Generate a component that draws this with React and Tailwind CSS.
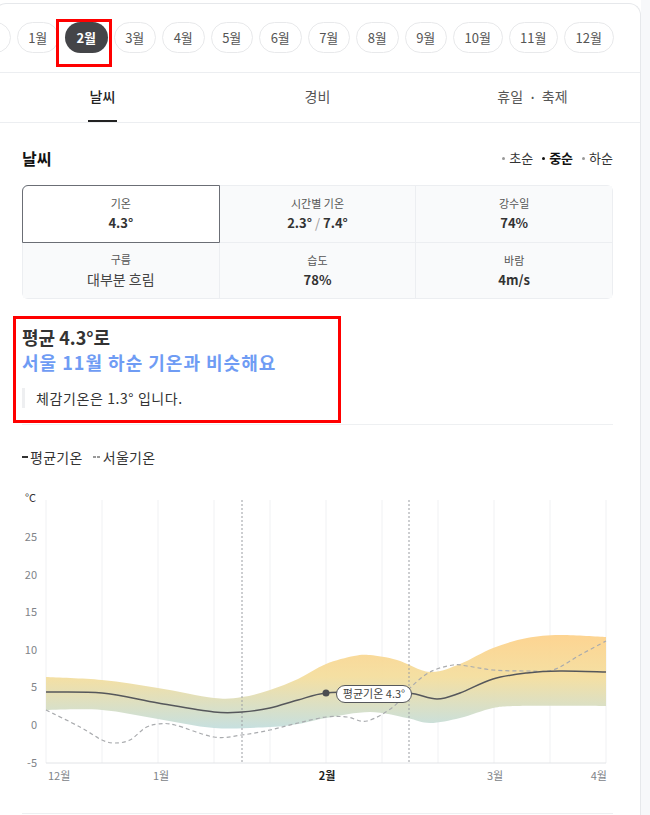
import React from 'react';

const months = ['1월', '2월', '3월', '4월', '5월', '6월', '7월', '8월', '9월', '10월', '11월', '12월'];

// Chart points in local svg coords (page x - 22, page y - 485)
const upper = [[24,192],[80,195],[136,203],[192,213],[220,212],[248,205],[276,194],[304,179],[332,171],[348,170],[375,175],[408,187],[438,179],[471,163],[505,153],[538,150],[584,152]];
const lower = [[24,225],[80,225],[136,234],[192,243],[248,242],[276,239],[304,233],[348,227],[385,233],[408,238],[438,233],[471,223],[498,221],[584,221]];
const avg = [[24,207],[80,208],[136,218],[192,227],[220,227],[248,223],[276,215],[304,208],[348,207],[387,208],[415,214],[438,208],[471,194],[505,188],[538,186],[584,187]];
const seoul = [[24,225],[58,242],[80,255],[93,258],[108,255],[123,243],[136,239],[153,240],[192,252],[220,250],[248,245],[276,238],[304,232],[325,232],[345,236],[371,222],[388,203],[408,187],[431,180],[445,181],[471,185],[505,186],[531,185],[558,170],[584,156]];

// Catmull-Rom to bezier
const smooth = (pts) => {
  let d = `M${pts[0][0]},${pts[0][1]}`;
  for (let i = 0; i < pts.length - 1; i++) {
    const p0 = pts[i - 1] || pts[i];
    const p1 = pts[i];
    const p2 = pts[i + 1];
    const p3 = pts[i + 2] || p2;
    const c1x = p1[0] + (p2[0] - p0[0]) / 6;
    const c1y = p1[1] + (p2[1] - p0[1]) / 6;
    const c2x = p2[0] - (p3[0] - p1[0]) / 6;
    const c2y = p2[1] - (p3[1] - p1[1]) / 6;
    d += ` C${c1x},${c1y} ${c2x},${c2y} ${p2[0]},${p2[1]}`;
  }
  return d;
};

const bandPath = smooth(upper) + ' ' + smooth([...lower].reverse()).replace('M', 'L') + ' Z';

const yTicks = [25, 20, 15, 10, 5, 0, -5];

const Chart = () => (
  <svg width="591" height="328" className="block">
    <defs>
      <linearGradient id="band" x1="0" y1="150" x2="0" y2="243" gradientUnits="userSpaceOnUse">
        <stop offset="0" stopColor="#fdd28c" />
        <stop offset="0.45" stopColor="#f4de9e" />
        <stop offset="1" stopColor="#c4dedd" />
      </linearGradient>
    </defs>
    {/* vertical grid */}
    {Array.from({ length: 11 }).map((_, i) => (
      <line key={i} x1={24 + i * 56} x2={24 + i * 56} y1="15" y2="278" stroke="#f0f1f3" strokeWidth="1" />
    ))}
    <line x1="24" x2="584" y1="278" y2="278" stroke="#e2e4e7" strokeWidth="1" />
    {/* y axis */}
    <text x="14" y="17" textAnchor="end" fontSize="11" fill="#333">°C</text>
    {yTicks.map((v) => (
      <text key={v} x="15" y={240 - v * 7.52 + 4} textAnchor="end" fontSize="11" fill="#808388">{v}</text>
    ))}
    {/* band */}
    <path d={bandPath} fill="url(#band)" opacity="0.95" />
    {/* period markers */}
    <line x1="220" x2="220" y1="15" y2="278" stroke="#9a9da2" strokeWidth="1" strokeDasharray="2 2" />
    <line x1="387" x2="387" y1="15" y2="278" stroke="#9a9da2" strokeWidth="1" strokeDasharray="2 2" />
    {/* seoul line */}
    <path d={smooth(seoul)} fill="none" stroke="#a9abae" strokeWidth="1.2" strokeDasharray="4 3" />
    {/* average line */}
    <path d={smooth(avg)} fill="none" stroke="#55575b" strokeWidth="1.5" />
    <circle cx="304" cy="208" r="3.5" fill="#4a4c50" />
    <rect x="314.5" y="200.5" width="75" height="17" rx="8.5" fill="#fff" stroke="#55575b" strokeWidth="1" />
    <text x="352" y="213" textAnchor="middle" fontSize="11" fill="#444">평균기온 4.3°</text>
    {/* x labels */}
    <text x="26" y="295" fontSize="11" fill="#808388">12월</text>
    <text x="139" y="295" textAnchor="middle" fontSize="11" fill="#808388">1월</text>
    <text x="305" y="295" textAnchor="middle" fontSize="11" fontWeight="700" fill="#222">2월</text>
    <text x="473" y="295" textAnchor="middle" fontSize="11" fill="#808388">3월</text>
    <text x="585" y="295" textAnchor="end" fontSize="11" fill="#808388">4월</text>
  </svg>
);

const Cell = ({ label, value, big, selected }) => (
  <div
    className={`flex h-[55.5px] flex-col items-center justify-center ${
      selected ? 'relative z-10 rounded-tl-[5px] bg-white outline outline-1 outline-[#6b6e75]' : 'bg-[#f9fafb]'
    }`}
  >
    <span className="text-[11px] leading-[16px] text-[#555]">{label}</span>
    {big ? (
      <span className="mt-[2px] text-[14px] leading-[20px] text-[#444]">{value}</span>
    ) : (
      <span className="mt-[3px] text-[13px] font-bold leading-[18px] text-[#333]">{value}</span>
    )}
  </div>
);

export default function App() {
  return (
    <div className="relative h-[815px] w-[650px] overflow-hidden bg-white font-['Noto_Sans_CJK_KR',sans-serif]">
      <div className="flex h-full">
        <div className="-ml-[6px] mt-[3px] w-[647px] shrink-0 rounded-t-[12px] border border-b-0 border-[#e6e8eb] bg-white">
          {/* month chips */}
          <div className="h-[69px] overflow-hidden border-b border-[#eceef1] pt-[18px]">
            <div className="-ml-[34px] flex gap-[6px]">
              <div className="h-[31px] w-[49.5px] shrink-0 rounded-full border border-[#e8e9eb]" />
              {months.map((m) => {
                const active = m === '2월';
                return (
                  <div
                    key={m}
                    className={`flex h-[31px] shrink-0 items-center justify-center rounded-full text-[13px] leading-none ${
                      m.length > 2 ? 'w-[49.5px]' : 'w-[42.5px]'
                    } ${active ? 'bg-[#444548] font-bold text-white' : 'border border-[#e8e9eb] text-[#555]'}`}
                  >
                    {m}
                  </div>
                );
              })}
            </div>
          </div>

          {/* tabs */}
          <div className="flex h-[50px] border-b border-[#eceef1] text-[14px]">
            <div className="flex flex-1 justify-center">
              <span className="flex items-center border-b-2 border-[#222] px-[2px] font-medium text-[#222]">날씨</span>
            </div>
            <div className="flex flex-1 items-center justify-center pb-[2px] text-[#555]">경비</div>
            <div className="flex flex-1 items-center justify-center pb-[2px] text-[#555]">
              휴일<span className="mx-[8px] text-[8px]">•</span>축제
            </div>
          </div>

          <div className="px-[27px]">
            {/* heading */}
            <div className="mt-[24px] flex h-[22px] items-center justify-between">
              <h2 className="text-[16px] font-bold leading-[22px] text-[#111]">날씨</h2>
              <div className="flex items-center gap-[9px] text-[13px] text-[#333]">
                <span className="flex items-center gap-[4px]"><span className="h-[3px] w-[3px] rounded-full bg-[#999]" />초순</span>
                <span className="flex items-center gap-[4px] font-bold text-[#111]"><span className="h-[3px] w-[3px] rounded-full bg-[#111]" />중순</span>
                <span className="flex items-center gap-[4px]"><span className="h-[3px] w-[3px] rounded-full bg-[#999]" />하순</span>
              </div>
            </div>

            {/* stats grid */}
            <div className="mt-[16px] grid grid-cols-3 gap-px rounded-[6px] bg-[#eceef1] p-px">
              <Cell label="기온" value="4.3°" selected />
              <Cell label="시간별 기온" value={<>2.3° <span className="font-normal text-[#999]">/</span> 7.4°</>} />
              <Cell label="강수일" value="74%" />
              <Cell label="구름" value="대부분 흐림" big />
              <Cell label="습도" value="78%" />
              <Cell label="바람" value="4m/s" />
            </div>

            {/* summary */}
            <div className="mt-[26px]">
              <p className="text-[18px] font-bold leading-[25px] text-[#333]">평균 4.3°로</p>
              <p className="text-[18px] font-bold leading-[25px] tracking-[1px] text-[#6f9cf4]">서울 11월 하순 기온과 비슷해요</p>
              <p className="mt-[13px] border-l-[3px] border-[#eeeff1] pl-[11px] text-[14px] leading-[20px] tracking-[0.6px] text-[#333]">
                체감기온은 1.3° 입니다.
              </p>
            </div>

            <div className="mt-[16px] border-t border-[#eef0f2]" />

            {/* legend */}
            <div className="mt-[23px] flex items-center text-[14px] leading-[18px] tracking-[0.3px] text-[#333]">
              <span className="mr-[2px] h-[2px] w-[6px] bg-[#333]" />
              평균기온
              <span className="ml-[10px] mr-[3px] flex gap-[1px]">
                <span className="h-[1.5px] w-[3px] bg-[#999]" />
                <span className="h-[1.5px] w-[3px] bg-[#999]" />
              </span>
              서울기온
            </div>

            <div className="mt-[19px]">
              <Chart />
            </div>
            <div className="border-t border-[#eef0f2]" />
          </div>
        </div>
        <div className="flex-1 bg-[#f7f8fa]" />
      </div>

      {/* annotation boxes */}
      <div className="pointer-events-none absolute left-[56px] top-[19px] h-[48px] w-[56px] border-[3px] border-[#ff0000]" />
      <div className="pointer-events-none absolute left-[13px] top-[316px] h-[107px] w-[328px] border-[3px] border-[#ff0000]" />
    </div>
  );
}
